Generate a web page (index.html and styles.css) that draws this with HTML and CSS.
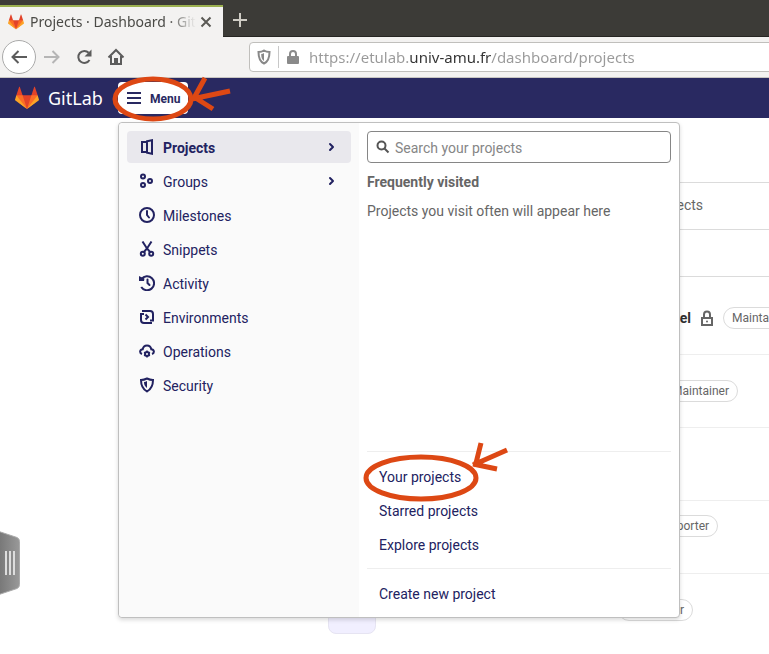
FILE: index.html
```html
<!DOCTYPE html>
<html lang="en">
<head>
    <meta charset="utf-8">
    <title>Projects · Dashboard · GitLab</title>
    <link rel="stylesheet" href="styles.css">
</head>
<body>
    <!-- shared shapes -->
    <svg class="sprite" aria-hidden="true">
        <symbol id="tanuki" viewBox="0 0 36 36">
            <path fill="#e24329" d="M2 14l9.38 9v-9l-4-12.28c-.205-.632-1.176-.632-1.38 0z"/>
            <path fill="#e24329" d="M34 14l-9.38 9v-9l4-12.28c.205-.632 1.176-.632 1.38 0z"/>
            <path fill="#e24329" d="M18 34.38L3 14h30z"/>
            <path fill="#fc6d26" d="M18 34.38L11.38 14H2l4 11z"/>
            <path fill="#fc6d26" d="M18 34.38L24.62 14H34l-4 11z"/>
            <path fill="#fca326" d="M2 14L.1 20.16c-.18.565 0 1.2.5 1.56L18 34.38z"/>
            <path fill="#fca326" d="M34 14l1.9 6.16c.18.565 0 1.2-.5 1.56L18 34.38z"/>
        </symbol>
        <symbol id="lock" viewBox="0 0 16 16">
            <path fill="none" stroke="currentColor" stroke-width="2" d="M3 8h10v7H3zM5 8V4.500a3 3 0 0 1 6 0V8"/>
            <circle cx="8" cy="11.500" r="1" fill="currentColor"/>
        </symbol>
        <symbol id="chevron" viewBox="0 0 16 16">
            <path fill="none" stroke="currentColor" stroke-width="2" stroke-linecap="round" stroke-linejoin="round" d="M7 5l3 3-3 3"/>
        </symbol>
    </svg>

    <div class="browser">
        <div class="tab-bar">
            <div class="tab">
                <svg class="favicon"><use href="#tanuki"/></svg>
                <span class="tab-title">Projects · Dashboard · GitLab</span>
                <button class="tab-close" aria-label="Close tab">
                    <svg width="12" height="12" viewBox="0 0 12 12"><path d="M1.500 1.500l9 9M10.500 1.500l-9 9"/></svg>
                </button>
            </div>
            <button class="new-tab" aria-label="New tab">
                <svg width="16" height="16" viewBox="0 0 16 16"><path d="M8 1v14M1 8h14"/></svg>
            </button>
        </div>
        <div class="toolbar">
            <button class="nav-btn back" aria-label="Back">
                <svg width="18" height="18" viewBox="0 0 18 18"><path d="M17 9H2.500M8.500 3l-6 6 6 6"/></svg>
            </button>
            <button class="nav-btn forward" aria-label="Forward">
                <svg width="18" height="18" viewBox="0 0 18 18"><path d="M1 9h14.500M9.500 3l6 6-6 6"/></svg>
            </button>
            <button class="nav-btn" aria-label="Reload">
                <svg width="18" height="18" viewBox="0 0 18 18"><path d="M14.500 12a6 6 0 1 1-.8-7.200"/><path class="solid" d="M16.500 1.500v7h-7z"/></svg>
            </button>
            <button class="nav-btn" aria-label="Home">
                <svg width="18" height="18" viewBox="0 0 18 18"><path d="M1.500 9.500L9 2l7.500 7.500M4 8v8h10V8"/><path class="solid" d="M7 10h4v6H7z"/></svg>
            </button>
            <div class="url-bar">
                <svg class="shield" width="14" height="16" viewBox="0 0 14 16"><path fill="none" stroke="#888" stroke-width="2" d="M7 1.500C5.500 2.500 3.500 3 1.500 3c0 6 1 9.500 5.500 11.500C11.500 12.500 12.500 9 12.500 3 10.500 3 8.500 2.500 7 1.500z"/><path fill="#888" d="M7 4v8C4.800 10.500 4.200 8.500 4.200 5 5.300 4.900 6.200 4.600 7 4z"/></svg>
                <span class="url-sep"></span>
                <svg class="padlock" width="12" height="14" viewBox="0 0 12 14"><path fill="#8a8a8a" d="M1 6h10a1 1 0 0 1 1 1v6a1 1 0 0 1-1 1H1a1 1 0 0 1-1-1V7a1 1 0 0 1 1-1z"/><path fill="none" stroke="#8a8a8a" stroke-width="2" d="M3 7V4a3 3 0 0 1 6 0v3"/></svg>
                <input class="url" type="text" aria-label="Address" value="https://etulab.univ-amu.fr/dashboard/projects">
            </div>
        </div>
    </div>

    <header class="navbar">
        <a class="brand" href="#">
            <svg class="logo"><use href="#tanuki"/></svg>
            <span>GitLab</span>
        </a>
        <div class="menu">
            <button class="menu-btn">
                <svg width="14" height="12" viewBox="0 0 14 12"><path stroke="currentColor" stroke-width="2" d="M0 1h14M0 6h14M0 11h14"/></svg>
                <span class="label">Menu</span>
            </button>
            <svg class="mark mark-menu" viewBox="0 0 120 46" aria-hidden="true">
                <ellipse cx="41" cy="23" rx="38" ry="20"/>
                <path d="M93 2L82 22M118 15L80 23M101 33L82 21"/>
            </svg>
            <div class="dropdown">
                <nav class="views">
                    <a class="item active" href="#">
                        <svg class="icon" viewBox="0 0 16 16"><path d="M7 3H3v10h4M8 2.200L13 1.200V14.800L8 13.800z"/></svg>
                        <span class="label">Projects</span>
                        <svg class="icon chev"><use href="#chevron"/></svg>
                    </a>
                    <a class="item" href="#">
                        <svg class="icon" viewBox="0 0 16 16"><circle cx="4" cy="3.500" r="2"/><circle cx="4" cy="12" r="2"/><circle cx="11" cy="8" r="2"/></svg>
                        <span class="label">Groups</span>
                        <svg class="icon chev"><use href="#chevron"/></svg>
                    </a>
                    <a class="item" href="#">
                        <svg class="icon" viewBox="0 0 16 16"><circle cx="8" cy="8" r="7"/><path d="M8 4v4l2 2.500" stroke-linecap="round"/></svg>
                        <span class="label">Milestones</span>
                    </a>
                    <a class="item" href="#">
                        <svg class="icon" viewBox="0 0 16 16"><path d="M3.500.5L8 7.500l3.500 4M12.500.5L8 7.500l-3.500 4"/><circle cx="3.800" cy="12.700" r="2"/><circle cx="12.200" cy="12.700" r="2"/></svg>
                        <span class="label">Snippets</span>
                    </a>
                    <a class="item" href="#">
                        <svg class="icon" viewBox="0 0 16 16"><path d="M2.500 4a7 7 0 1 1-.3 8"/><path class="solid" d="M0 1l1.500.8L5.500 3.500 5 6H0z"/><path d="M8.500 4.500V8l2 2" stroke-linecap="round"/></svg>
                        <span class="label">Activity</span>
                    </a>
                    <a class="item" href="#">
                        <svg class="icon" viewBox="0 0 16 16"><path d="M3 2h8a3 3 0 0 1 3 3v6.500h-3M5 5H2v6a3 3 0 0 0 3 3h8M6.500 5.500L9 8l-2.500 2.500"/></svg>
                        <span class="label">Environments</span>
                    </a>
                    <a class="item" href="#">
                        <svg class="icon" viewBox="0 0 16 16"><path d="M3 11C.4 10 .4 6.800 3.700 6.300 4.500 1.200 11.500 1.200 12.300 6.300 15.600 6.800 15.600 10 13 11"/><circle cx="8" cy="11" r="2"/><path stroke-width="1.500" d="M8 7.500V9M8 13v1.500M5 9.300l1.300.7M9.700 12l1.300.7M11 9.300l-1.300.7M6.300 12l-1.300.7"/></svg>
                        <span class="label">Operations</span>
                    </a>
                    <a class="item" href="#">
                        <svg class="icon" viewBox="0 0 16 16"><path d="M8 1.500C6 2.500 4 3 2 3c0 5.500 1.500 9 6 11.500C12.500 12 14 8.500 14 3 12 3 10 2.500 8 1.500z"/><path class="solid" d="M8 4v7C6 9.500 5 8 5 5c1 0 2-.4 3-1z"/></svg>
                        <span class="label">Security</span>
                    </a>
                </nav>
                <div class="panel">
                    <div class="search">
                        <svg class="search-icon" viewBox="0 0 14 14"><circle cx="5.500" cy="5.500" r="4"/><path d="M8.500 8.500l4 4"/></svg>
                        <input type="text" aria-label="Search your projects" placeholder="Search your projects">
                    </div>
                    <h2>Frequently visited</h2>
                    <p>Projects you visit often will appear here</p>
                    <div class="links links-main">
                        <a class="item" href="#">
                            <span class="label">Your projects</span>
                            <svg class="mark mark-link" viewBox="0 0 148 62" aria-hidden="true">
                                <ellipse cx="59" cy="37" rx="55" ry="21"/>
                                <path d="M119 2L113 26M145 9L111 24M135 28L111 23"/>
                            </svg>
                        </a>
                        <a class="item" href="#"><span class="label">Starred projects</span></a>
                        <a class="item" href="#"><span class="label">Explore projects</span></a>
                    </div>
                    <div class="links">
                        <a class="item" href="#"><span class="label">Create new project</span></a>
                    </div>
                </div>
            </div>
        </div>
    </header>

    <main>
        <div class="page-title"></div>
        <nav class="page-tabs"><a href="#">Explore projects</a></nav>
        <div class="filters"></div>
        <ul class="projects">
            <li>
                <span class="avatar"></span>
                <b class="name name-xl">el</b>
                <svg class="lock"><use href="#lock"/></svg>
                <span class="role">Maintainer</span>
            </li>
            <li>
                <span class="avatar"></span>
                <b class="name name-lg"></b>
                <svg class="lock"><use href="#lock"/></svg>
                <span class="role">Maintainer</span>
            </li>
            <li></li>
            <li class="described">
                <span class="avatar"></span>
                <b class="name name-md"></b>
                <svg class="lock"><use href="#lock"/></svg>
                <span class="role">Reporter</span>
            </li>
            <li>
                <span class="avatar"></span>
                <b class="name name-sm"></b>
                <span class="role">Maintainer</span>
            </li>
        </ul>
    </main>

    <button class="handle" aria-label="Open side panel">
        <svg width="20" height="64" viewBox="0 0 20 64">
            <defs>
                <linearGradient id="grip"><stop offset="0" stop-color="#777"/><stop offset="1" stop-color="#999"/></linearGradient>
            </defs>
            <path fill="url(#grip)" stroke="#aaa" d="M-1 .5L17 6.500q2.500 1 2.500 4v43q0 3-2.500 4L-1 63.500z"/>
            <path stroke="#ddd" stroke-width="2" d="M6 20v24M10 20v24M14 20v24"/>
        </svg>
    </button>
</body>
</html>
```
FILE: styles.css
```css
* {
    box-sizing: border-box;
}

body {
    margin: 0;
    min-height: 100vh;
    position: relative;
    overflow: hidden;
    background-color: #fff;
    font-family: Roboto, "Noto Sans", sans-serif;
    font-size: 14px;
    line-height: 16px;
    color: #303030;
}

a {
    color: inherit;
    text-decoration: none;
}

button {
    padding: 0;
    border: none;
    background: none;
    font-family: inherit;
    cursor: pointer;
}

svg {
    display: block;
    flex-shrink: 0;
}

.sprite {
    position: absolute;
    width: 0;
    height: 0;
}

/* browser */
.browser {
    font-family: "Noto Sans", "Open Sans", sans-serif;
    background-color: #f3f2f1;
    border-bottom: 1px solid #c8c6c2;
}

.tab-bar {
    display: flex;
    align-items: flex-end;
    height: 37px;
    background-color: #3c3b37;
    box-shadow: inset 0 -1px #262522;
}

.tab {
    display: flex;
    align-items: center;
    width: 223px;
    height: 32px;
    padding: 0 11px 0 8px;
    background-color: #f3f2f1;
    border-top: 2px solid #9bb04f;
}

.favicon {
    width: 16px;
    height: 16px;
    margin-right: 6px;
}

.tab-title {
    flex: 1;
    overflow: hidden;
    white-space: nowrap;
    line-height: 20px;
    color: #4a4a46;
    -webkit-mask-image: linear-gradient(to right, #000 138px, transparent 166px);
    mask-image: linear-gradient(to right, #000 138px, transparent 166px);
}

.tab-close svg,
.new-tab svg {
    fill: none;
    stroke: #5a5955;
    stroke-width: 2;
}

.new-tab {
    margin: 0 0 9px 9px;
}

.new-tab svg {
    stroke: #cfccc4;
}

.toolbar {
    display: flex;
    align-items: center;
    height: 40px;
    padding-left: 2px;
}

.nav-btn {
    display: flex;
    align-items: center;
    justify-content: center;
    width: 32px;
    height: 32px;
}

.nav-btn svg {
    fill: none;
    stroke: #5c5c5c;
    stroke-width: 2;
}

.nav-btn .solid {
    fill: #5c5c5c;
    stroke: none;
}

.back {
    width: 34px;
    height: 34px;
    border: 1px solid #aaa;
    border-radius: 50%;
    background-color: #fff;
}

.nav-btn.forward svg {
    stroke: #b5b5b5;
}

.url-bar {
    flex: 1;
    display: flex;
    align-items: center;
    height: 30px;
    margin: 0 -8px 0 117px;
    padding-left: 7px;
    border: 1px solid #c0bfbc;
    border-radius: 4px;
    background-color: #fff;
}

.url-sep {
    width: 1px;
    height: 22px;
    margin: 0 8px 0 7px;
    background-color: #c8c8c8;
}

.url {
    flex: 1;
    height: 28px;
    margin-left: 10px;
    padding: 0;
    border: none;
    outline: none;
    font-family: inherit;
    font-size: 15px;
    /* domain is darker than the rest of the address */
    background: linear-gradient(to right, #999 100px, #333 100px, #333 182px, #999 182px);
    -webkit-background-clip: text;
    background-clip: text;
    color: transparent;
}

/* navbar */
.navbar {
    display: flex;
    align-items: center;
    height: 40px;
    padding-left: 15px;
    background-color: #292961;
}

.brand {
    display: flex;
    align-items: center;
    width: 103px;
    color: #fff;
    font-family: "Noto Sans", sans-serif;
    font-size: 18px;
    line-height: 24px;
}

.logo {
    width: 24px;
    height: 24px;
    margin-right: 9px;
}

.menu {
    position: relative;
}

.menu-btn {
    display: flex;
    align-items: center;
    gap: 9px;
    width: 70px;
    height: 32px;
    padding-left: 9px;
    border-radius: 4px;
    background-color: #fff;
    color: #292961;
    font-size: 12px;
    font-weight: bold;
}

/* hand drawn marks */
.mark {
    position: absolute;
    z-index: 3;
    fill: none;
    stroke: #dd4814;
    stroke-width: 5;
    pointer-events: none;
}

.mark-menu {
    left: -6px;
    top: -6px;
    width: 120px;
    height: 46px;
}

.mark-link {
    left: -5px;
    top: -19px;
    width: 148px;
    height: 62px;
}

.dropdown {
    position: absolute;
    left: 0;
    top: 40px;
    z-index: 2;
    display: flex;
    width: 562px;
    height: 496px;
    border: 1px solid #bfbfbf;
    border-radius: 4px;
    background-color: #fff;
    box-shadow: 0 2px 4px rgba(0, 0, 0, 0.15);
    color: #222261;
}

.views {
    display: flex;
    flex-direction: column;
    gap: 2px;
    width: 240px;
    padding: 8px;
    background-color: #fafafa;
    border-radius: 4px 0 0 4px;
}

.item {
    position: relative;
    display: flex;
    align-items: center;
    gap: 8px;
    height: 32px;
    padding: 0 12px;
    border-radius: 4px;
}

.label {
    padding-top: 2px;
}

.active {
    background-color: #e9e8ed;
    font-weight: bold;
}

.icon {
    width: 16px;
    height: 16px;
    fill: none;
    stroke: currentColor;
    stroke-width: 2;
}

.icon .solid {
    fill: currentColor;
    stroke: none;
}

.chev {
    margin-left: auto;
}

.panel {
    flex: 1;
    display: flex;
    flex-direction: column;
    padding: 8px;
    color: #666;
}

.search {
    display: flex;
    align-items: center;
    height: 32px;
    padding-left: 8px;
    border: 1px solid #868686;
    border-radius: 4px;
}

.search-icon {
    width: 14px;
    height: 14px;
    margin-right: 5px;
    fill: none;
    stroke: #555;
    stroke-width: 2;
}

.search input {
    flex: 1;
    height: 28px;
    padding: 2px 0 0;
    border: none;
    outline: none;
    background: none;
    font-family: inherit;
    font-size: 14px;
}

.search input::placeholder {
    color: #868686;
}

.panel h2 {
    margin: 11px 0 13px;
    font-size: 14px;
}

.panel p {
    margin: 0;
}

.links {
    display: flex;
    flex-direction: column;
    gap: 2px;
    padding-top: 8px;
    border-top: 1px solid #eee;
    color: #222261;
}

.links-main {
    margin-top: auto;
    padding-bottom: 8px;
}

/* page behind the menu */
main {
    padding-left: 328px;
    overflow: hidden;
}

.page-title {
    height: 65px;
    border-bottom: 1px solid #dbdbdb;
}

.page-tabs {
    display: flex;
    align-items: center;
    height: 47px;
    padding: 0 0 2px 275px;
    border-bottom: 1px solid #dbdbdb;
    color: #666;
}

.filters {
    height: 47px;
    border-bottom: 1px solid #dbdbdb;
}

.projects {
    margin: 0;
    padding: 5px 0 0;
    list-style: none;
}

.projects li {
    display: flex;
    align-items: center;
    gap: 8px;
    height: 73px;
    border-bottom: 1px solid #eee;
}

.projects li:last-child {
    height: 72px;
    border-bottom: none;
}

.projects li.described {
    align-items: flex-start;
    padding-top: 14px;
}

.avatar {
    flex-shrink: 0;
    width: 48px;
    height: 48px;
    border: 1px solid #e6e4f2;
    border-radius: 8px;
    background-color: #f1efff;
}

.name {
    flex-shrink: 0;
    text-align: right;
}

.name-xl {
    width: 307px;
}

.name-lg {
    width: 247px;
}

.name-md {
    width: 238px;
}

.name-sm {
    width: 226px;
}

.lock {
    width: 16px;
    height: 16px;
    color: #666;
}

.role {
    flex-shrink: 0;
    padding: 2px 8px;
    border: 1px solid #dbdbdb;
    border-radius: 12px;
    font-size: 12px;
    color: #666;
}

.handle {
    position: absolute;
    left: 0;
    top: 531px;
}
```
